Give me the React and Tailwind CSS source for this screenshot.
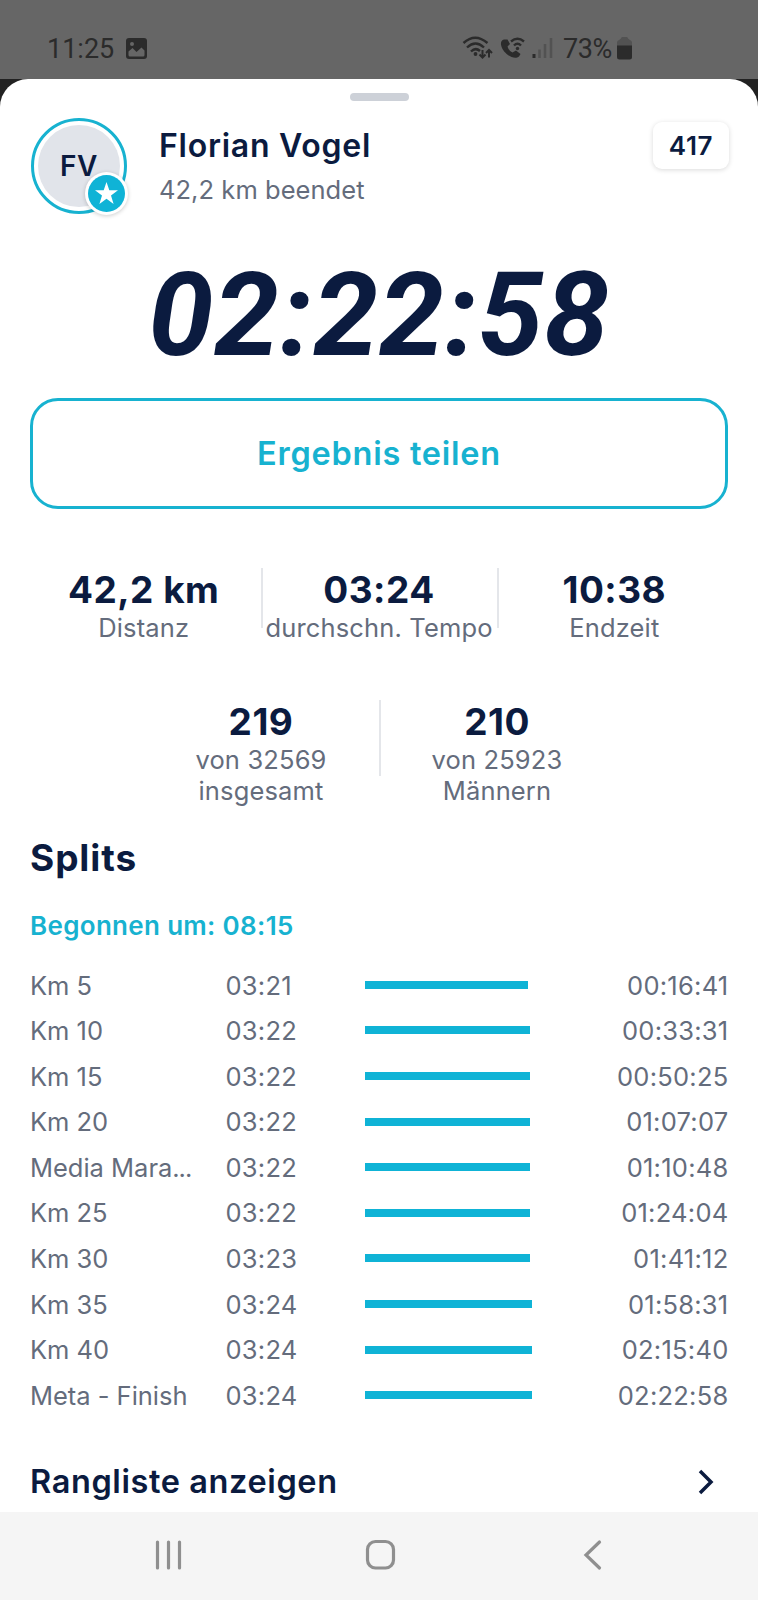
const splits = [
  { name: 'Km 5', pace: '03:21', bar: 163, time: '00:16:41' },
  { name: 'Km 10', pace: '03:22', bar: 165, time: '00:33:31' },
  { name: 'Km 15', pace: '03:22', bar: 165, time: '00:50:25' },
  { name: 'Km 20', pace: '03:22', bar: 165, time: '01:07:07' },
  { name: 'Media Mara...', pace: '03:22', bar: 165, time: '01:10:48' },
  { name: 'Km 25', pace: '03:22', bar: 165, time: '01:24:04' },
  { name: 'Km 30', pace: '03:23', bar: 165, time: '01:41:12' },
  { name: 'Km 35', pace: '03:24', bar: 166.5, time: '01:58:31' },
  { name: 'Km 40', pace: '03:24', bar: 166.5, time: '02:15:40' },
  { name: 'Meta - Finish', pace: '03:24', bar: 166.5, time: '02:22:58' },
];

function StatusBar() {
  return (
    <div className="flex h-[79px] shrink-0 items-start bg-[#666666] pl-[47px] pt-[34px] font-[Roboto,sans-serif] text-[27px] leading-[30px] text-[#2b2b2b]">
      <span className="w-[79px]">11:25</span>
      <svg className="mt-[4px] h-[21px] w-[21px]" viewBox="0 0 21 21">
        <rect width="21" height="21" rx="3" fill="#2b2b2b" />
        <circle cx="6" cy="6" r="2" fill="#666666" />
        <path d="M2.500 17V13.500L6.500 10l4 4 5-4.500 3 3V17q0 1.500-1.500 1.500H4q-1.500 0-1.500-1.500z" fill="#666666" />
      </svg>
      <svg className="ml-[315px] mt-[1px] h-[26px] w-[92px]" viewBox="0 0 92 26" fill="none" stroke="#2b2b2b" strokeWidth="2.400">
        {/* wifi */}
        <path d="M1.500 8Q13-2.500 25.500 8M5 12.500Q13.500 4.500 22 12.500M9 16.500Q13.500 12 18 16" />
        <circle cx="13.500" cy="19" r="1.900" fill="#2b2b2b" stroke="none" />
        <path d="M20.500 15v7M17.500 19.500l3 3 3-3M27 22.500v-7M24 18l3-3 3 3" strokeWidth="2" />
        {/* wifi calling */}
        <path d="M42 4.500q-3.500 1-3 5c.5 4 3.500 8 7 10.500s8 4 11 1.500l1.500-2.500-4.500-3.500-3.500 2q-4-2-5-6l2.500-2.500-2.500-4.500z" fill="#2b2b2b" stroke="none" />
        <path d="M49 6.500q6.500-5.500 13 0M52 10.500q3.500-3.500 7 0" />
        <circle cx="55.500" cy="13.500" r="1.700" fill="#2b2b2b" stroke="none" />
        {/* signal */}
        <path d="M72 19v4" strokeWidth="3" />
        <path d="M77.500 14.500v8.500M83 9v14M89 3v20" stroke="#525252" strokeWidth="2.500" />
      </svg>
      <span className="ml-[9px] w-[54px] whitespace-nowrap tracking-[-0.400px]">73%</span>
      <svg className="mt-[3px] h-[23px] w-[15px]" viewBox="0 0 15 23">
        <path d="M4 1.500Q4 0 5.500 0h4Q11 0 11 1.500L13 3q2 .5 2 2.500V9H0V5.500Q0 3.500 2 3z" fill="#525252" />
        <path d="M0 8.500h15V20q0 2.500-2.500 2.500h-10Q0 22.500 0 20z" fill="#2b2b2b" />
      </svg>
    </div>
  );
}

function Stat({ value, lines }) {
  return (
    <div className="flex w-[236px] flex-col items-center pr-[2px]">
      <div className="text-[37px] font-bold leading-[44px] tracking-[0.500px] text-[#0b1b3f]">{value}</div>
      {lines.map((line) => (
        <div key={line} className="whitespace-nowrap text-[25.500px] leading-[31px] tracking-[0.150px] text-[#646c7c]">{line}</div>
      ))}
    </div>
  );
}

export default function App() {
  return (
    <div className="flex h-[1600px] w-[758px] flex-col overflow-hidden bg-[#222222] font-[Inter,sans-serif] text-[#0b1b3f]">
      <StatusBar />

      <main className="flex h-[1433px] shrink-0 flex-col rounded-t-[28px] bg-white px-[30px]">
        <div className="mx-auto mt-[14px] h-[8px] w-[59px] rounded-full bg-[#cdd1d8]" />

        <header className="mt-[16px] flex h-[98px] items-start">
          <div className="relative ml-[1px] mt-[1px] flex h-[96px] w-[96px] items-center justify-center rounded-full border-[3.500px] border-[#17b2d0] p-[4px]">
            <div className="flex h-full w-full items-center justify-center rounded-full bg-[#e1e4ea] text-[28px] font-semibold tracking-[0.700px]">FV</div>
            <div className="absolute left-[51px] top-[51px] flex h-[43px] w-[43px] items-center justify-center rounded-full bg-white shadow-[0_1px_4px_rgba(0,0,0,0.200)]">
              <svg className="h-[37px] w-[37px]" viewBox="0 0 37 37">
                <circle cx="18.500" cy="18.500" r="18.500" fill="#0fb3d6" />
                <path d="M18.500 7l2.800 8.200h8.700l-7 5.200 2.600 8.600-7.100-5.200-7.100 5.200 2.600-8.600-7-5.200h8.700z" fill="#fff" />
              </svg>
            </div>
          </div>
          <div className="ml-[32px] mt-[8px] flex-1">
            <div className="text-[32px] font-semibold leading-[42px] tracking-[0.750px]">Florian Vogel</div>
            <div className="text-[25.500px] leading-[46px] tracking-[0.050px] text-[#646c7c]">42,2 km beendet</div>
          </div>
          <div className="-mr-[1px] mt-[5px] flex h-[47px] w-[76px] items-center justify-center rounded-[9px] bg-white text-[26px] font-semibold tracking-[0.700px] shadow-[0_1px_5px_rgba(0,0,0,0.150)]">417</div>
        </header>

        <div className="mt-[40px] text-center font-[Roboto,sans-serif] text-[117px] font-bold italic leading-[120px] tracking-[0.700px]">02:22:58</div>

        <button className="mt-[23px] h-[111px] w-full shrink-0 rounded-[28px] border-[3px] border-[#17b2d0] pt-[1px] text-[32.500px] font-semibold tracking-[0.750px] text-[#17b2d0]">
          Ergebnis teilen
        </button>

        <section className="-mx-[5px] mt-[59px] flex h-[76px] justify-center pl-[2px]">
          <Stat value="42,2 km" lines={['Distanz']} />
          <div className="-mx-px h-[60px] w-[2px] bg-[#e4e6ea]" />
          <Stat value="03:24" lines={['durchschn. Tempo']} />
          <div className="-mx-px h-[60px] w-[2px] bg-[#e4e6ea]" />
          <Stat value="10:38" lines={['Endzeit']} />
        </section>

        <section className="mt-[56px] flex h-[106px] justify-center pl-[2px]">
          <Stat value="219" lines={['von 32569', 'insgesamt']} />
          <div className="-mx-px h-[76px] w-[2px] bg-[#e4e6ea]" />
          <Stat value="210" lines={['von 25923', 'Männern']} />
        </section>

        <h2 className="mt-[32px] text-[37px] font-bold leading-[40px] tracking-[0.900px]">Splits</h2>
        <p className="mt-[32px] text-[26px] font-semibold leading-[32px] tracking-[0.320px] text-[#17b2d0]">Begonnen um: 08:15</p>

        <div className="mt-[20.500px] text-[25.500px] leading-[45.600px] tracking-[0.250px] text-[#646c7c]">
          {splits.map((s) => (
            <div key={s.name} className="flex h-[45.600px] items-center">
              <div className="w-[195.500px] tracking-[-0.020px]">
                {s.name.replace('...', '')}
                {s.name.endsWith('...') && <span className="tracking-[-1px]">...</span>}
              </div>
              <div className="w-[139.500px]">{s.pace}</div>
              <div className="mb-[1px] h-[8px] bg-[#0fb3d6]" style={{ width: s.bar }} />
              <div className="-mr-[0.500px] ml-auto">{s.time}</div>
            </div>
          ))}
        </div>

        <div className="mt-[43.500px] flex h-[40px] items-center justify-between">
          <span className="text-[32.500px] font-semibold leading-[40px] tracking-[0.600px]">Rangliste anzeigen</span>
          <svg className="mr-[13px] h-[26px] w-[18px]" viewBox="0 0 18 26" fill="none" stroke="#0b1b3f" strokeWidth="3.500">
            <path d="M3 2l11 11L3 24" />
          </svg>
        </div>
      </main>

      <nav className="flex h-[88px] shrink-0 items-center bg-[#f5f5f5] pb-[2px] pl-[154px]">
        <svg className="h-[32px] w-[470px]" viewBox="0 0 470 32" fill="none" stroke="#8f8f8f" strokeWidth="3.200">
          <path d="M3.500 3v26M14.500 3v26M25.500 3v26" strokeLinecap="round" />
          <rect x="213.500" y="2.500" width="26" height="26.500" rx="8" />
          <path d="M445.500 3L432 16l13.500 13" strokeLinecap="round" />
        </svg>
      </nav>
    </div>
  );
}
